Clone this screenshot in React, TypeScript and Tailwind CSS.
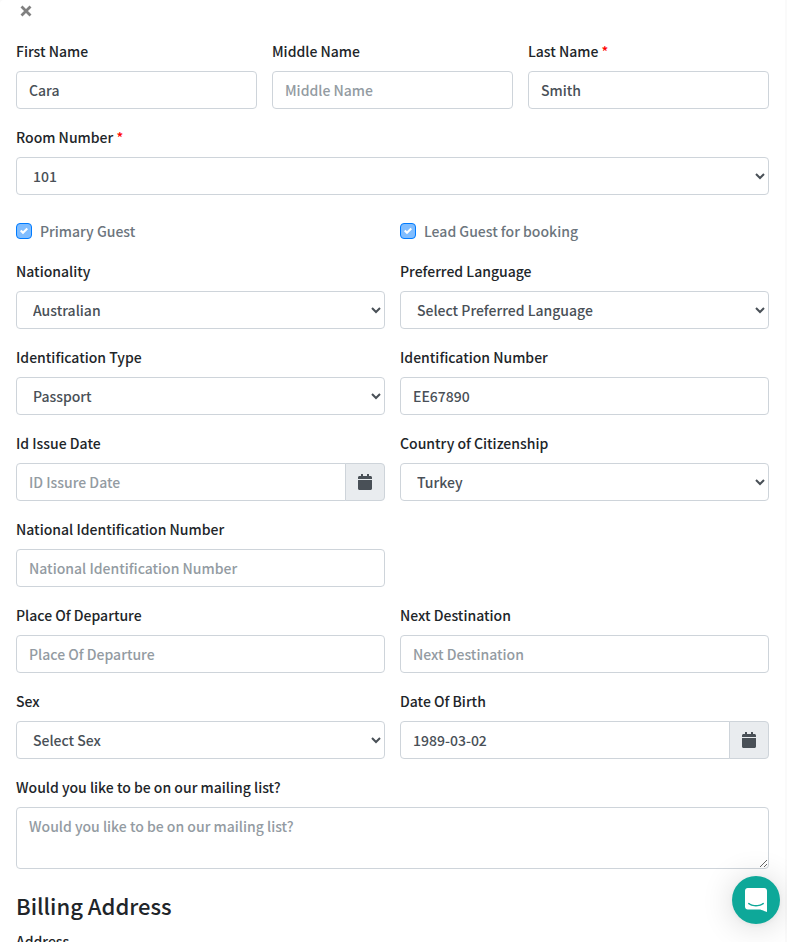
import React from 'react'

import { FaCalendar } from 'react-icons/fa'

const control =
  'block w-full rounded border border-[#ced4da] bg-white px-3 text-sm leading-6 font-medium text-[#495057] placeholder:text-[#939ba2] placeholder:opacity-100 focus:border-[#80bdff] focus:outline-none'

type FieldProps = {
  id: string
  label: string
  required?: boolean
  children: React.ReactNode
}

const Field: React.FC<FieldProps> = ({ id, label, required, children }) => {
  return (
    <div>
      <label htmlFor={id} className="mb-2 block">
        {label} {required && <span className="text-[#ff0000]">*</span>}
      </label>
      {children}
    </div>
  )
}

type TextFieldProps = Omit<FieldProps, 'children'> & { value?: string; placeholder?: string }

const TextField: React.FC<TextFieldProps> = ({ id, label, required, value, placeholder }) => (
  <Field id={id} label={label} required={required}>
    <input id={id} type="text" defaultValue={value} placeholder={placeholder} className={`${control} h-[38px] py-1.5`} />
  </Field>
)

const SelectField: React.FC<Omit<FieldProps, 'children'> & { options: string[] }> = ({
  id,
  label,
  required,
  options,
}) => (
  <Field id={id} label={label} required={required}>
    <select id={id} className={`${control} h-[38px] py-1.5`}>
      {options.map((option) => (
        <option key={option}>{option}</option>
      ))}
    </select>
  </Field>
)

const DateField: React.FC<TextFieldProps> = ({ id, label, value, placeholder }) => (
  <Field id={id} label={label}>
    <div className="flex">
      <input
        id={id}
        type="text"
        defaultValue={value}
        placeholder={placeholder}
        className={`${control} h-[38px] min-w-0 flex-1 rounded-r-none py-1.5`}
      />
      <button
        type="button"
        aria-label={`Pick ${label}`}
        className="-ml-px flex w-10 items-center justify-center rounded-r border border-[#ced4da] bg-[#e9ecef] text-[#495057]"
      >
        <FaCalendar className="size-4" />
      </button>
    </div>
  </Field>
)

const CheckField: React.FC<{ id: string; label: string }> = ({ id, label }) => (
  <div className="flex items-center gap-2">
    <span className="relative flex size-4">
      <input
        id={id}
        type="checkbox"
        defaultChecked
        disabled
        className="size-4 appearance-none rounded border border-[#007bff] bg-[#80bdff]"
      />
      <svg viewBox="0 0 8 8" className="pointer-events-none absolute inset-1 size-2" aria-hidden="true">
        <path fill="#fff" d="M6.564.75l-3.59 3.612-1.538-1.55L0 4.26 2.974 7.25 8 2.193z" />
      </svg>
    </span>
    <label htmlFor={id} className="text-[#6c757d]">
      {label}
    </label>
  </div>
)

const ChatLauncher: React.FC = () => (
  <button
    type="button"
    aria-label="Open chat"
    className="fixed right-[7px] bottom-[18px] flex size-12 items-center justify-center rounded-full bg-[#0ea899] shadow-[0_1px_6px_rgba(0,0,0,0.06),0_2px_32px_rgba(0,0,0,0.16)]"
  >
    <svg viewBox="0 0 28 32" className="h-6 w-[22px]" preserveAspectRatio="none" aria-hidden="true">
      <path
        fill="#fff"
        d="M28 32s-4.714-1.855-8.527-3.34H3.437C1.54 28.66 0 27.026 0 25.013V3.644C0 1.633 1.54 0 3.437 0h21.125c1.898 0 3.437 1.632 3.437 3.645v18.404H28V32zm-4.139-11.982a.88.88 0 00-1.292-.105c-.03.026-3.015 2.681-8.57 2.681-5.486 0-8.517-2.636-8.571-2.684a.88.88 0 00-1.29.107 1.01 1.01 0 00-.219.708.992.992 0 00.318.664c.142.128 3.537 3.15 9.762 3.15 6.226 0 9.621-3.022 9.763-3.15a.992.992 0 00.317-.664 1.01 1.01 0 00-.218-.707z"
      />
    </svg>
  </button>
)

export default function App() {
  return (
    <div className="h-screen overflow-hidden bg-[#fafafa] pr-0.5 font-['Noto_Sans_CJK_SC',sans-serif] text-sm leading-6 font-medium text-[#212529]">
      <form className="min-h-screen rounded-tl bg-white px-4">
        <div className="flex h-[39px] pt-[5px]">
          <button type="button" aria-label="Close" className="ml-1 flex size-3 items-center justify-center">
            <svg viewBox="0 0 12 12" className="size-3" aria-hidden="true">
              <path d="M1.5 1.5l9 9M10.5 1.5l-9 9" stroke="#808080" strokeWidth="2.8" />
            </svg>
          </button>
        </div>
        <div className="grid grid-cols-3 gap-x-[15px]">
          <TextField id="first-name" label="First Name" value="Cara" />
          <TextField id="middle-name" label="Middle Name" placeholder="Middle Name" />
          <TextField id="last-name" label="Last Name" required value="Smith" />
        </div>
        <div className="mt-4 mb-6">
          <SelectField id="room" label="Room Number" required options={['101', '102', '103']} />
        </div>
        <div className="grid grid-cols-2 gap-x-[15px] gap-y-4">
          <CheckField id="primary" label="Primary Guest" />
          <CheckField id="lead" label="Lead Guest for booking" />
          <SelectField id="nationality" label="Nationality" options={['Australian', 'Turkish']} />
          <SelectField id="language" label="Preferred Language" options={['Select Preferred Language', 'English']} />
          <SelectField id="id-type" label="Identification Type" options={['Passport', 'Driving Licence']} />
          <TextField id="id-number" label="Identification Number" value="EE67890" />
          <DateField id="id-issue" label="Id Issue Date" placeholder="ID Issure Date" />
          <SelectField id="citizenship" label="Country of Citizenship" options={['Turkey', 'Australia']} />
          <TextField
            id="national-id"
            label="National Identification Number"
            placeholder="National Identification Number"
          />
          <div />
          <TextField id="departure" label="Place Of Departure" placeholder="Place Of Departure" />
          <TextField id="destination" label="Next Destination" placeholder="Next Destination" />
          <SelectField id="sex" label="Sex" options={['Select Sex', 'Female', 'Male']} />
          <DateField id="dob" label="Date Of Birth" value="1989-03-02" />
          <div className="col-span-2">
            <Field id="mailing" label="Would you like to be on our mailing list?">
              <textarea
                id="mailing"
                rows={2}
                placeholder="Would you like to be on our mailing list?"
                className={`${control} py-1.5`}
              />
            </Field>
          </div>
        </div>
        <h4 className="mt-5 mb-2 text-[22px] leading-8 font-medium">Billing Address</h4>
        <TextField id="address" label="Address" placeholder="Address" />
      </form>
      <ChatLauncher />
    </div>
  )
}
